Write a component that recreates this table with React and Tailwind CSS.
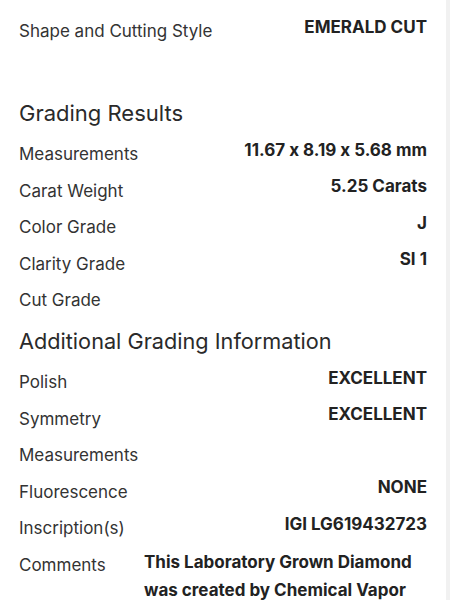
import React from 'react';

const top = [
    { label: 'Measurements', value: '11.67 x 8.19 x 5.68 mm' },
    { label: 'Carat Weight', value: '5.25 Carats' },
    { label: 'Color Grade', value: 'J' },
    { label: 'Clarity Grade', value: 'SI 1' },
    { label: 'Cut Grade', value: '' },
];

const extra = [
    { label: 'Polish', value: 'EXCELLENT' },
    { label: 'Symmetry', value: 'EXCELLENT' },
    { label: 'Measurements', value: '' },
    { label: 'Fluorescence', value: 'NONE' },
    { label: 'Inscription(s)', value: 'IGI LG619432723' },
];

const Row = ({ label, value }) => (
    <div className="flex items-start justify-between">
        <span className="pt-[6.25px] pb-[6.25px] leading-[24px] text-[17px] text-[#333333]">{label}</span>
        <span className="pt-[2px] leading-[24px] text-[17px] font-bold text-[#222222]">{value}</span>
    </div>
);

export default function App() {
    return (
        <div
            className="flex h-[600px] w-[450px] overflow-hidden bg-white [font-variant-ligatures:no-contextual]"
            style={{ fontFamily: 'Inter, "Liberation Sans", sans-serif' }}
        >
            <div className="flex-1 pl-[19px] pr-[19px] pt-[13px]">
                <Row label="Shape and Cutting Style" value="EMERALD CUT" />

                <h2 className="mt-[48.5px] pb-[7.75px] text-[22px] leading-[30px] text-[#2a2a2a]">Grading Results</h2>
                {top.map((r, i) => <Row key={i} {...r} />)}

                <h2 className="mt-[7.75px] pb-[7.75px] text-[21.7px] leading-[30px] text-[#2a2a2a]">Additional Grading Information</h2>
                {extra.map((r, i) => <Row key={i} {...r} />)}

                <div className="flex items-start justify-between">
                    <span className="pt-[6.25px] leading-[24px] text-[17px] text-[#333333]">Comments</span>
                    <p className="w-[283px] pt-[2px] text-left text-[17px] font-bold leading-[28px] text-[#222222]">
                        This Laboratory Grown Diamond was created by Chemical Vapor Deposition (CVD) growth process
                    </p>
                </div>
            </div>
            <div className="w-[4px] bg-[#f1f1f1]" />
        </div>
    );
}
